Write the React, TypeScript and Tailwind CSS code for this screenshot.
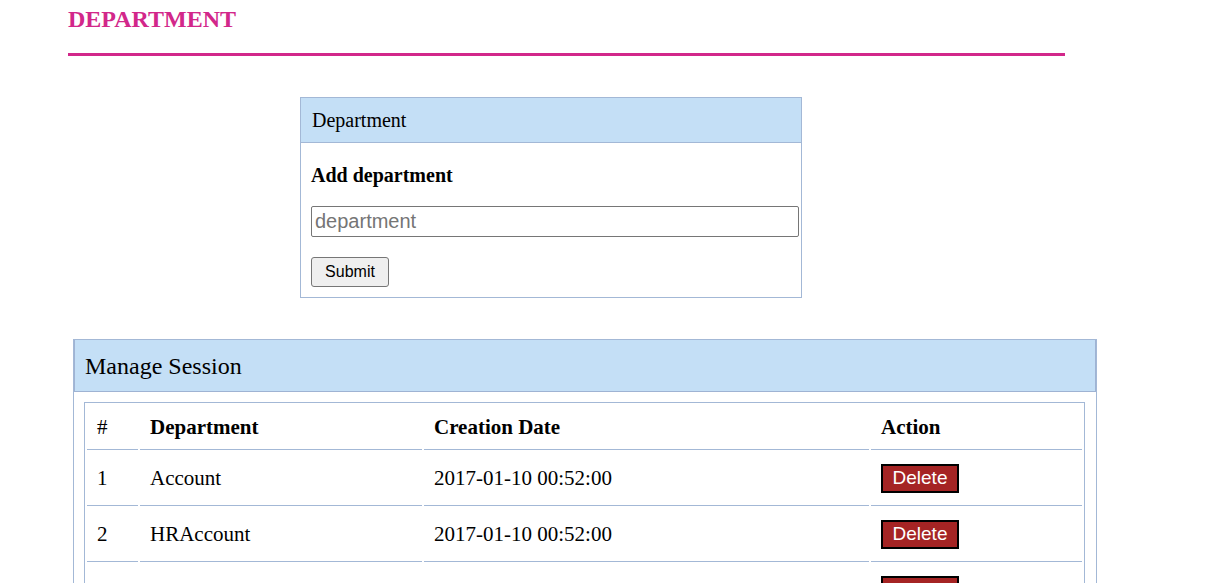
import React, { useState } from 'react';

const serif = "font-['Times_New_Roman','Liberation_Serif',serif]";
const sans = "font-['Arial','Liberation_Sans',sans-serif]";

const rows = [
  { id: 1, name: 'Account', created: '2017-01-10 00:52:00' },
  { id: 2, name: 'HRAccount', created: '2017-01-10 00:52:00' },
  { id: 3, name: 'Admin', created: '2017-01-10 00:52:00' },
  { id: 4, name: 'Sales', created: '2017-01-10 00:52:00' },
];

const App: React.FC = () => {
  const [department, setDepartment] = useState('');

  return (
    <div className={`${serif} min-h-screen bg-white text-black`}>
      <div className="pl-[68px]">
        <h2 className="mt-[5px] text-[24px] leading-[28px] font-bold text-[#d2278a]">DEPARTMENT</h2>
        <div className="mt-[20px] h-[3px] w-[997px] bg-[#d2278a]" />
      </div>

      {/* add form */}
      <div className="ml-[300px] mt-[41px] w-[502px] border border-[#a3b8d6]">
        <div className="flex h-[45px] items-center border-b border-[#a3b8d6] bg-[#c4dff6] px-[11px] pt-[1px] text-[20px] leading-[23px]">
          Department
        </div>
        <div className="px-[10px] pb-[10px] pt-[21px]">
          <h4 className="text-[20px] leading-[23px] font-bold">Add department</h4>
          <input
            type="text"
            value={department}
            onChange={(e) => setDepartment(e.target.value)}
            placeholder="department"
            className={`${sans} mt-[19px] block h-[31px] w-[488px] rounded-[2px] border border-[#767676] px-[3px] text-[20px] placeholder:text-[#757575] outline-none`}
          />
          <button
            className={`${sans} mt-[20px] block h-[30px] w-[78px] rounded-[3px] border border-[#767676] bg-[#efefef] text-[16px]`}
          >
            Submit
          </button>
        </div>
      </div>

      {/* list */}
      <div className="ml-[73px] mt-[41px] w-[1024px] border border-[#a3b8d6]">
        <div className="flex h-[52px] items-center border-x border-b border-[#9fb3d3] bg-[#c4dff6] px-[10px] pt-[1px] text-[24px] leading-[27px]">
          Manage Session
        </div>
        <div className="py-[10px] pl-[10px] pr-[11px]">
          <table className="w-[1001px] border-separate border-spacing-[2px] border border-[#a3b8d6] text-[21px] leading-[24px]">
            <thead>
              <tr>
                <th className="h-[45px] w-[51px] border-b border-[#a3b8d6] px-[10px] text-left font-normal">#</th>
                <th className="h-[45px] w-[282px] border-b border-[#a3b8d6] px-[10px] text-left font-bold">Department</th>
                <th className="h-[45px] w-[445px] border-b border-[#a3b8d6] px-[10px] text-left font-bold">Creation Date</th>
                <th className="h-[45px] border-b border-[#a3b8d6] px-[10px] text-left font-bold">Action</th>
              </tr>
            </thead>
            <tbody>
              {rows.map((row) => (
                <tr key={row.id}>
                  <td className="h-[54px] border-b border-[#a3b8d6] px-[10px] pb-[2px] align-middle">{row.id}</td>
                  <td className="h-[54px] border-b border-[#a3b8d6] px-[10px] pb-[2px] align-middle">{row.name}</td>
                  <td className="h-[54px] border-b border-[#a3b8d6] px-[10px] pb-[2px] align-middle">{row.created}</td>
                  <td className="h-[54px] border-b border-[#a3b8d6] px-[10px] pb-[1px] align-middle">
                    <button
                      className={`${sans} block h-[29px] w-[78px] border-2 border-black bg-[#a52424] text-[19px] leading-[20px] text-white`}
                    >
                      Delete
                    </button>
                  </td>
                </tr>
              ))}
            </tbody>
          </table>
        </div>
      </div>
    </div>
  );
};

export default App;
